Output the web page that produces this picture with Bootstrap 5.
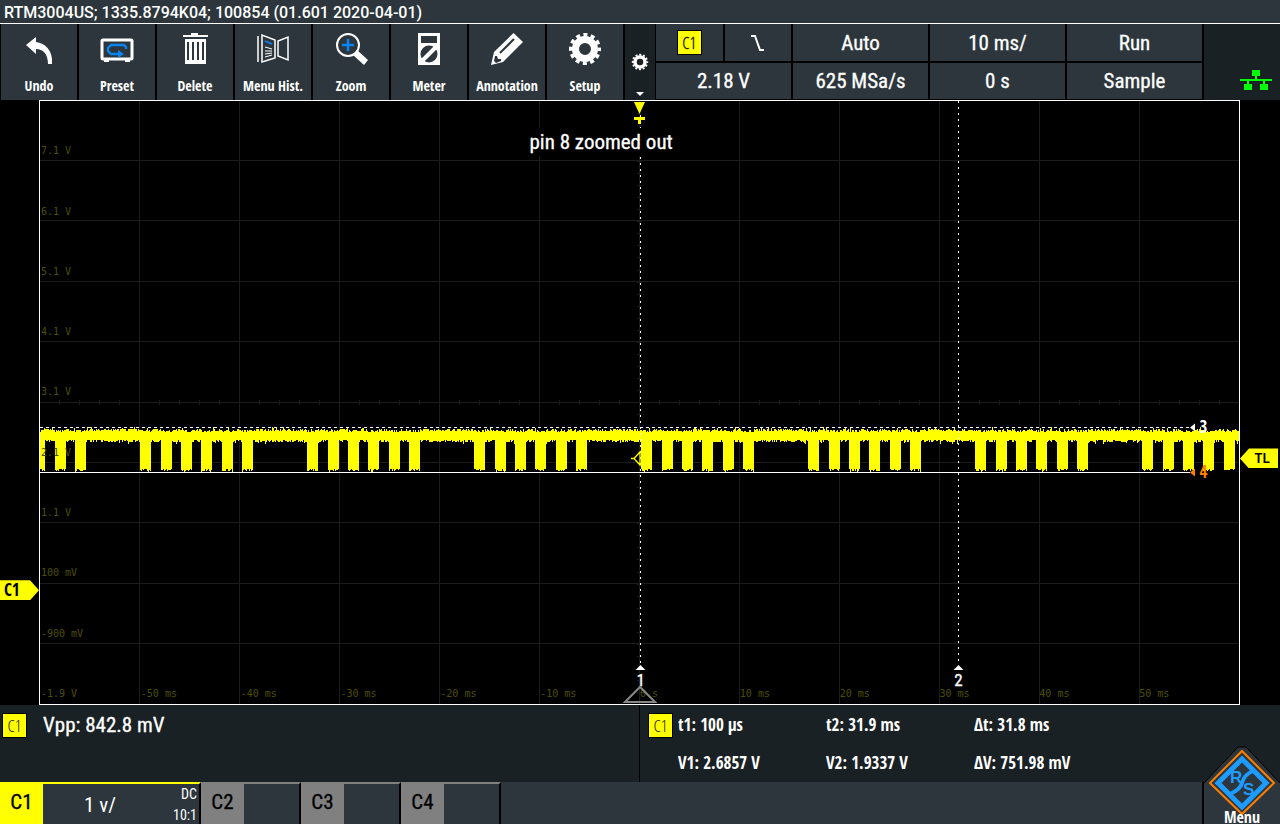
<!DOCTYPE html>
<html lang="en">
<head>
<meta charset="utf-8">
<meta name="viewport" content="width=device-width, initial-scale=1">
<title>RTM3004US oscilloscope</title>
<link href="https://cdn.jsdelivr.net/npm/bootstrap@5.3.0/dist/css/bootstrap.min.css" rel="stylesheet">
<style>
  :root {
    --slate: #2c363c;
    --panel: #1a2124;
    --ch1: #ffff00;
    --value-font: "Roboto Condensed", Roboto, sans-serif;
    --label-font: "Open Sans Condensed", "Roboto Condensed", sans-serif;
    --thin-font: "Open Sans Condensed Light", "Roboto Condensed", sans-serif;
  }
  body { background: #000; color: #fff; font-family: var(--value-font); font-size: 21px; line-height: 24px; }
  button { color: inherit; font: inherit; border: 0; padding: 0; }
  .title-bar { background: var(--slate); border-bottom: 1px solid #fff; font: 500 16px/23px Roboto, sans-serif; padding: 1px 4px 0; height: 24px; }
  .tool-grid { display: grid; grid-template-columns: repeat(8, 78fr) 32fr repeat(4, 137fr) 76fr; height: 76px; }
  .tool { background: var(--slate); border-left: 1px solid #000; border-right: 1px solid #000; font: 14px/18px var(--label-font); padding: 7px 0 5px; white-space: nowrap; }
  .tool svg { width: 36px; height: 36px; }
  .mini { background: var(--panel); border-left: 1px solid #000; border-right: 1px solid #000; }
  .cell-pair { display: grid; grid-template-rows: 37px 36px; row-gap: 2px; border-right: 2px solid #000; border-bottom: 1px solid #000; }
  .cell-pair button { background: var(--slate); -webkit-text-stroke: .3px currentColor; }
  .slope-row { display: grid; grid-template-columns: 1fr 1fr; column-gap: 2px; }
  .tag { display: block; background: var(--ch1); color: #111; border: 1px solid #000; width: 25px; height: 25px; font: 17px/23px var(--thin-font); text-align: center; }
  .side { width: 39px; }
  .plot { border: 1px solid #fff; }
  .plot .trace { position: absolute; inset: 0; width: 100%; height: 100%; }
  .scale-y, .scale-x { position: absolute; inset: 0; color: #4f4f00; font: 10px/12px "DejaVu Sans Mono", monospace; padding-left: 1px; }
  .scale-y span, .scale-x span { padding-bottom: 4px; }
  .scale-y { display: grid; grid-template-rows: repeat(10, 1fr); align-items: end; }
  .scale-x { display: grid; grid-template-columns: repeat(12, 1fr); align-items: end; }
  .caption { position: absolute; left: 46.8%; top: 27px; transform: translateX(-50%); background: #000; padding: 2px 6px; white-space: nowrap; -webkit-text-stroke: .3px #fff; }
  .cursor-no { position: absolute; transform: translateX(-50%); font-size: 17px; line-height: 14px; -webkit-text-stroke: .3px #fff; }
  .level-no { position: absolute; transform: translateY(-50%); font: 17px/18px var(--label-font); }
  .marker { position: absolute; height: 20px; color: #000; font: 17px/20px var(--label-font); background: var(--ch1); }
  .marker-tl { font: 600 14px/20px "Noto Sans", sans-serif; }
  .results { display: grid; grid-template-columns: 1fr 1fr; height: 77px; background: var(--panel); }
  .vpp { padding-left: 16px; -webkit-text-stroke: .3px #fff; }
  .readout { display: grid; grid-template-columns: repeat(3, 148px); row-gap: 14px; font: 17px/24px var(--label-font); padding-left: 5px; }
  .channels { display: grid; grid-template-columns: 201fr 100fr 100fr 100fr 702fr 77fr; height: 42px; }
  .chan { background: var(--slate); border-top: 2px solid var(--c); border-right: 2px solid #000; }
  .chan-name { background: var(--c); color: #000; width: 43px; margin-top: -2px; padding-top: 9px; line-height: 22px; -webkit-text-stroke: .3px #000; }
  .chan-mode { font: 14px/21px var(--value-font); padding-right: 2px; }
  .menu-btn { background: var(--slate); border-left: 1px solid #000; font: 16px/14px var(--label-font); }
  .menu-btn svg { position: absolute; left: 50%; bottom: 5px; transform: translateX(-50%); width: 76px; height: 76px; }
  .menu-btn span { position: absolute; left: 0; right: 0; bottom: 0; line-height: 18px; }
</style>
</head>
<body>
<div class="d-flex flex-column min-vh-100">
  <header class="title-bar">RTM3004US; 1335.8794K04; 100854 (01.601 2020-04-01)</header>

  <nav class="tool-grid" aria-label="Toolbar">
    <button class="tool d-flex flex-column align-items-center justify-content-between" type="button">
      <svg viewBox="0 0 36 36"><path d="M5 14 15 6v5c9 1 17 8 16 22h-4c0-10-5-15-12-15v5z" fill="#fff"/></svg>Undo</button>
    <button class="tool d-flex flex-column align-items-center justify-content-between" type="button">
      <svg viewBox="0 0 36 36"><g fill="none"><rect x="3" y="9" width="30" height="19" rx="1" stroke="#fff" stroke-width="3"/><path d="M5 28h5v3H5zM26 28h5v3h-5z" fill="#fff"/><path d="M27 18v-2l-2-2H12l-3 3v3l3 3h8" stroke="#0a84f0" stroke-width="2.400"/><path d="m19 19 6 4-6 4z" fill="#0a84f0"/></g></svg>Preset</button>
    <button class="tool d-flex flex-column align-items-center justify-content-between" type="button">
      <svg viewBox="0 0 36 36"><path fill="#fff" fill-rule="evenodd" d="M6 4h8V2h7v2h10v2H6zM8 8h21v25H8zM10 11v18h2V11zM15 11v18h2V11zM20 11v18h2V11zM25 11v18h2V11z"/></svg>Delete</button>
    <button class="tool d-flex flex-column align-items-center justify-content-between" type="button">
      <svg viewBox="0 0 36 36"><g fill="none" stroke="#fff" stroke-width="1.500"><path d="M3 5v26M7 4v27l13-4V9zM23 10v15l10 4V6z"/><path d="m10 16 7 2m-7 2h7m-7 3 7-1m-7 4 7-2" stroke-width="1"/><path d="m10 10 7 3" stroke="#0a84f0"/></g></svg>Menu Hist.</button>
    <button class="tool d-flex flex-column align-items-center justify-content-between" type="button">
      <svg viewBox="0 0 36 36"><circle cx="15" cy="14" r="11" fill="none" stroke="#fff" stroke-width="2"/><path d="m20 24 4-5 11 10-4 5z" fill="#fff"/><path d="M15 8v12M9 14h12" stroke="#0a84f0" stroke-width="2.600"/></svg>Zoom</button>
    <button class="tool d-flex flex-column align-items-center justify-content-between" type="button">
      <svg viewBox="0 0 36 36"><rect x="7" y="2" width="22" height="32" fill="#fff"/><rect x="10" y="5" width="16" height="7" fill="#2c363c"/><circle cx="18" cy="23" r="8.500" fill="#2c363c"/><path d="m11 30 14-14" stroke="#fff" stroke-width="4"/></svg>Meter</button>
    <button class="tool d-flex flex-column align-items-center justify-content-between" type="button">
      <svg viewBox="0 0 36 36"><path d="M24.500 2 34 11 14 31 2 34 5 21z" fill="#fff"/><path d="M25 8 11 22" stroke="#2c363c" stroke-width="2"/><path d="M6 25l2 0 1 3 3 0 0 2-5 2-2-2z" fill="#2c363c"/></svg>Annotation</button>
    <button class="tool d-flex flex-column align-items-center justify-content-between" type="button">
      <svg viewBox="0 0 36 36"><g fill="none" stroke="#fff"><circle cx="18" cy="18" r="9.500" stroke-width="7"/><circle cx="18" cy="18" r="14" stroke-width="4" stroke-dasharray="4 3.330" stroke-dashoffset="2"/></g></svg>Setup</button>
    <button class="mini d-flex flex-column align-items-center justify-content-end" type="button" aria-label="Toolbar settings">
      <svg width="18" height="47" viewBox="0 0 18 47"><g fill="none" stroke="#fff"><circle cx="9" cy="9" r="5" stroke-width="3.500"/><circle cx="9" cy="9" r="7.200" stroke-width="2" stroke-dasharray="2 1.770" stroke-dashoffset="1"/></g><path d="M5 39h8l-4 4z" fill="#fff"/></svg></button>
    <div class="cell-pair">
      <div class="slope-row">
        <button type="button" class="d-flex align-items-center justify-content-center"><span class="tag">C1</span></button>
        <button type="button" aria-label="Falling slope" class="d-flex align-items-center justify-content-center"><svg width="14" height="18" viewBox="0 0 14 18"><path d="M0 2h4l5 14h4" fill="none" stroke="#fff" stroke-width="2"/></svg></button>
      </div>
      <button type="button">2.18 V</button>
    </div>
    <div class="cell-pair"><button type="button">Auto</button><button type="button">625 MSa/s</button></div>
    <div class="cell-pair"><button type="button">10 ms/</button><button type="button">0 s</button></div>
    <div class="cell-pair"><button type="button">Run</button><button type="button">Sample</button></div>
    <div class="d-flex align-items-end justify-content-end pe-2 pb-2" style="background:var(--panel)">
      <svg width="32" height="22" viewBox="0 0 32 22" role="img" aria-label="LAN connected"><path fill="#0f0" d="M12 0h8v6h-3v3h15v2h-7v3h3v6h-8v-6h3v-3H9v3h3v6H4v-6h3v-3H0V9h15V6h-3z"/></svg>
    </div>
  </nav>

  <main class="d-flex flex-grow-1">
    <div class="side position-relative">
      <div class="marker ps-1" style="left:0;top:79.4%;width:39px;clip-path:polygon(0 0,30px 0,39px 10px,30px 20px,0 20px)">C1</div>
    </div>
    <div class="plot flex-grow-1 position-relative">
      <svg class="trace" viewBox="40 101 1199 603" preserveAspectRatio="none" shape-rendering="crispEdges" aria-label="Channel 1 waveform">
        <path id="grid" stroke="#1c1c1c" fill="none"/>
        <path id="wave" fill="#ff0"/>
        <path d="M40 427.500H1190" stroke="#fff" stroke-dasharray="3 3"/>
        <path d="M40 472.500H1190" stroke="#fff"/>
        <path d="M640.500 103V665M958.500 101V665" stroke="#fff" stroke-dasharray="2 4"/>
        <g shape-rendering="auto">
          <path d="M634 458.500 640 452v13zM631 458.500h4" fill="#000" stroke="#ff0" stroke-width="1.300"/>
          <path d="M634 102h11l-5.500 12z" fill="#ff0"/>
          <path d="M634 117h11v3h-4v4h-3v-4h-4z" fill="#ff0"/>
          <path d="M635.500 670h10l-5-5zM953.500 670h10l-5-5z" fill="#fff"/>
          <path d="M1190 427.500l5-4v8z" fill="#fff"/><path d="M1190 472.500l5-4v8z" fill="#ff7f00"/>
        </g>
      </svg>
      <div class="scale-y"><span>7.1 V</span><span>6.1 V</span><span>5.1 V</span><span>4.1 V</span><span>3.1 V</span><span>2.1 V</span><span>1.1 V</span><span>100 mV</span><span>-900 mV</span><span>-1.9 V</span></div>
      <div class="scale-x"><span></span><span>-50 ms</span><span>-40 ms</span><span>-30 ms</span><span>-20 ms</span><span>-10 ms</span><span>0 s</span><span>10 ms</span><span>20 ms</span><span>30 ms</span><span>40 ms</span><span>50 ms</span></div>
      <div class="caption">pin 8 zoomed out</div>
      <span class="cursor-no" style="left:50.1%;bottom:17px">1</span>
      <span class="cursor-no" style="left:76.6%;bottom:17px">2</span>
      <span class="level-no" style="left:96.7%;top:54.1%">3</span>
      <span class="level-no" style="left:96.7%;top:61.6%;color:#ff7f00">4</span>
      <svg class="position-absolute bottom-0 start-50 translate-middle-x" width="34" height="19" viewBox="0 0 34 19"><path d="M2 17 17 2l15 15z" fill="none" stroke="#888" stroke-width="2"/></svg>
    </div>
    <div class="side position-relative" style="width:40px">
      <div class="marker marker-tl text-end pe-2" style="left:0;top:57.6%;width:38px;clip-path:polygon(9px 0,38px 0,38px 20px,9px 20px,0 10px)">TL</div>
    </div>
  </main>

  <section class="results">
    <div class="d-flex align-items-start pt-2" style="border-right:1px solid #000;padding-left:2px">
      <span class="tag">C1</span><span class="vpp">Vpp: 842.8 mV</span>
    </div>
    <div class="d-flex align-items-start ps-2 pt-2">
      <span class="tag">C1</span>
      <div class="readout"><span>t1: 100 µs</span><span>t2: 31.9 ms</span><span>Δt: 31.8 ms</span><span>V1: 2.6857 V</span><span>V2: 1.9337 V</span><span>ΔV: 751.98 mV</span></div>
    </div>
  </section>

  <footer class="channels">
    <button type="button" class="chan d-flex" style="--c:#ffff00">
      <span class="chan-name align-self-stretch">C1</span><span class="flex-grow-1 align-self-center pe-3">1 v/</span>
      <span class="chan-mode text-end">DC<br>10:1</span></button>
    <button type="button" class="chan d-flex" style="--c:#808080"><span class="chan-name align-self-stretch">C2</span></button>
    <button type="button" class="chan d-flex" style="--c:#808080"><span class="chan-name align-self-stretch">C3</span></button>
    <button type="button" class="chan d-flex" style="--c:#808080"><span class="chan-name align-self-stretch">C4</span></button>
    <div style="background:var(--slate);border-right:1px solid #000"></div>
    <button type="button" class="menu-btn position-relative">
      <svg viewBox="0 0 76 76"><path d="M0 38 34 2h8l34 36v3H0z" fill="#2c363c"/><path d="M0 38 34 2h8l34 36" fill="none" stroke="#000"/><path d="M38 6 70 38 38 69 6 38z" fill="#2c363c" stroke="#ff7f00" stroke-width="2"/><path d="M38 14 62 38 38 62 14 38z" fill="none" stroke="#1e9bff" stroke-width="5"/><path d="M49 26c-8 3-10 8-11 12s-5 8-12 11" fill="none" stroke="#1e9bff" stroke-width="4"/><g fill="#1e9bff" font-family="Liberation Sans" font-weight="bold" font-size="17"><text x="26" y="38">R</text><text x="39" y="50">S</text></g></svg>
      <span>Menu</span></button>
  </footer>
</div>
<script src="https://cdn.jsdelivr.net/npm/bootstrap@5.3.0/dist/js/bootstrap.bundle.min.js"></script>
<script>
  // Graticule: 12 x 10 divisions, with tick marks on the centre axes.
  let g = '';
  for (let i = 1; i < 12; i++) g += `M${39.5 + i * 100} 101V704`;
  for (let i = 1; i < 10; i++) g += `M40 ${Math.floor(100 + i * 60.4) + .5}H1239`;
  for (let x = 59.5; x < 1239; x += 20) g += `M${x} 400v5`;
  for (let y = 112.5; y < 704; y += 12.08) g += `M637 ${Math.round(y) + .5}h5`;
  document.getElementById('grid').setAttribute('d', g);

  // Data bursts: six low pulses every 167 px, on a noisy high level.
  let seed = 7;
  const rnd = () => (seed = (seed * 16807) % 2147483647) / 2147483647;
  const noise = () => Math.floor(rnd() * 3) + (rnd() < .06 ? 2 : 0);
  const low = x => [0, 21, 41, 61, 82, 102].some(o => {
    const p = (x - 140 - o + 334) % 167; return p >= 0 && p < 11; });
  let w = '';
  for (let x = 40; x < 1239; x++) {
    const top = (low(x) ? 431 : 430) - noise() + 1;
    const bottom = low(x) ? 469 + noise() : 440 + noise();
    w += `M${x} ${top}h1V${bottom}h-1z`;
  }
  document.getElementById('wave').setAttribute('d', w);
</script>
</body>
</html>
